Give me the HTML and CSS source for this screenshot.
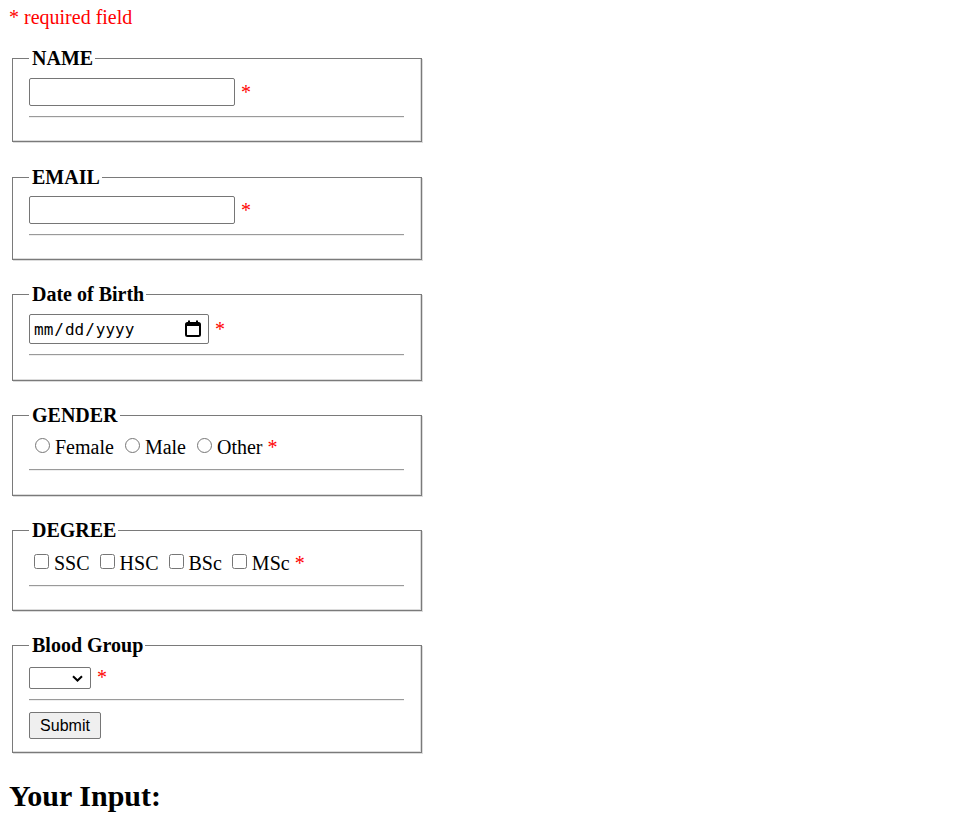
FILE: index.html
```html
<!DOCTYPE html>
<html lang="en">
<head>
<meta charset="utf-8">
<title>Form</title>
<link rel="stylesheet" href="styles.css">
</head>
<body>
<p class="required">* required field</p>
<form class="form">
  <fieldset class="group">
    <legend class="legend">NAME</legend>
    <div class="row"><input class="text-input" type="text"><span class="error">*</span></div>
    <hr class="rule">
  </fieldset>
  <fieldset class="group group-email">
    <legend class="legend">EMAIL</legend>
    <div class="row"><input class="text-input" type="text"><span class="error">*</span></div>
    <hr class="rule">
  </fieldset>
  <fieldset class="group group-tall">
    <legend class="legend">Date of Birth</legend>
    <div class="row">
      <span class="date-wrap">
        <input class="date-input" type="date">
        <svg class="date-icon" width="16" height="17" viewBox="0 0 16 17" aria-hidden="true">
          <rect x="1" y="3" width="14" height="13" rx="1.5" fill="none" stroke="#000" stroke-width="2"/>
          <rect x="1" y="3" width="14" height="3" fill="#000"/>
          <rect x="3" y="0.5" width="2" height="3" fill="#000"/>
          <rect x="11" y="0.5" width="2" height="3" fill="#000"/>
        </svg>
      </span>
      <span class="error">*</span>
    </div>
    <hr class="rule">
  </fieldset>
  <fieldset class="group group-tall">
    <legend class="legend">GENDER</legend>
    <div class="row choices">
      <label class="choice"><input class="radio" type="radio" name="g">Female</label>
      <label class="choice"><input class="radio" type="radio" name="g">Male</label>
      <label class="choice"><input class="radio" type="radio" name="g">Other</label>
      <span class="error">*</span>
    </div>
    <hr class="rule">
  </fieldset>
  <fieldset class="group">
    <legend class="legend">DEGREE</legend>
    <div class="row choices choices-degree">
      <label class="choice"><input class="check" type="checkbox">SSC</label>
      <label class="choice"><input class="check" type="checkbox">HSC</label>
      <label class="choice"><input class="check" type="checkbox">BSc</label>
      <label class="choice"><input class="check" type="checkbox">MSc</label>
      <span class="error">*</span>
    </div>
    <hr class="rule">
  </fieldset>
  <fieldset class="group group-last">
    <legend class="legend">Blood Group</legend>
    <div class="row row-select">
      <span class="select-wrap">
        <select class="select"><option></option></select>
        <svg class="select-arrow" width="11" height="7" viewBox="0 0 11 7" aria-hidden="true">
          <path d="M1 1.2 L5.5 5.5 L10 1.2" fill="none" stroke="#000" stroke-width="2"/>
        </svg>
      </span>
      <span class="error">*</span>
    </div>
    <hr class="rule">
    <button class="submit" type="button">Submit</button>
  </fieldset>
</form>
<h2 class="title">Your Input:</h2>
</body>
</html>
```

FILE: styles.css
```css
html, body {
  background: #fff;
}
body {
  margin: 8px;
  font-family: "Liberation Serif", "Times New Roman", serif;
  font-size: 20px;
  color: #000;
}
.required {
  margin: 0;
  padding-left: 1px;
  color: #ff0000;
  line-height: 18px;
}
.form {
  margin: 0;
}
.group {
  box-sizing: border-box;
  width: 410px;
  margin: 23px 0 0 4px;
  padding: 0 17px 12px 16px;
  border: 1px solid #7a7a7a;
  box-shadow: inset -1px -1px 0 #dcdcdc, 1px 1px 0 #dcdcdc;
}
.group:first-child {
  margin-top: 21px;
}
.group-email {
  margin-top: 24px;
}
.legend {
  padding: 0 2px 0 3px;
  font-weight: bold;
  line-height: 22px;
}
.row {
  display: flex;
  align-items: center;
  margin-top: 9px;
}
.group-email .row {
  margin-top: 8px;
}
.text-input {
  box-sizing: border-box;
  width: 206px;
  height: 28px;
  margin: 0;
  border: 1px solid #767676;
  border-radius: 2px;
  padding: 1px 2px;
  font: 16px Arial, sans-serif;
}
.date-wrap {
  position: relative;
  display: inline-flex;
}
.date-input {
  box-sizing: border-box;
  width: 180px;
  height: 30px;
  margin: 0;
  border: 1px solid #767676;
  border-radius: 2px;
  padding: 1px 6px 1px 3px;
  font: 16px "DejaVu Sans Mono", monospace;
}
.date-input::-webkit-calendar-picker-indicator {
  opacity: 0;
  width: 16px;
  height: 18px;
  padding: 0;
  margin: 0;
}
.date-icon {
  position: absolute;
  right: 8px;
  top: 6px;
  pointer-events: none;
}
.error {
  color: #ff0000;
  margin-left: 6px;
}
.choices {
  margin-top: 10px;
  line-height: 23px;
}
.choices-degree {
  margin-top: 11px;
}
.choice {
  display: inline-flex;
  align-items: center;
  margin-right: 5px;
}
.radio {
  width: 15px;
  height: 15px;
  margin: 0 5px 4px 6px;
}
.check {
  width: 15px;
  height: 15px;
  margin: 0 5px 4px 5px;
}
.choices .error {
  margin-left: 0;
}
.rule {
  margin: 10px 0 11px;
  border: none;
  border-top: 1px solid #9a9a9a;
  border-bottom: 1px solid #eeeeee;
  height: 0;
}
.group-tall .rule {
  margin-bottom: 12px;
}
.row-select {
  margin-top: 10px;
  line-height: 23px;
}
.select-wrap {
  position: relative;
  display: inline-flex;
}
.select {
  box-sizing: border-box;
  width: 62px;
  height: 22px;
  margin: 0;
  border: 1px solid #767676;
  border-radius: 2px;
  background: #fff;
  font: 16px Arial, sans-serif;
  appearance: none;
  -webkit-appearance: none;
}
.select-arrow {
  position: absolute;
  right: 8px;
  top: 8px;
  pointer-events: none;
}
.group-last {
  padding-bottom: 13px;
}
.submit {
  display: block;
  box-sizing: border-box;
  width: 72px;
  height: 27px;
  margin: 0;
  padding: 0;
  border: 1px solid #767676;
  border-radius: 2px;
  background: #efefef;
  font: 16px Arial, sans-serif;
  color: #000;
}
.title {
  margin: 26px 0 0;
  padding-left: 1px;
  font-size: 30px;
  line-height: 34px;
}
```
